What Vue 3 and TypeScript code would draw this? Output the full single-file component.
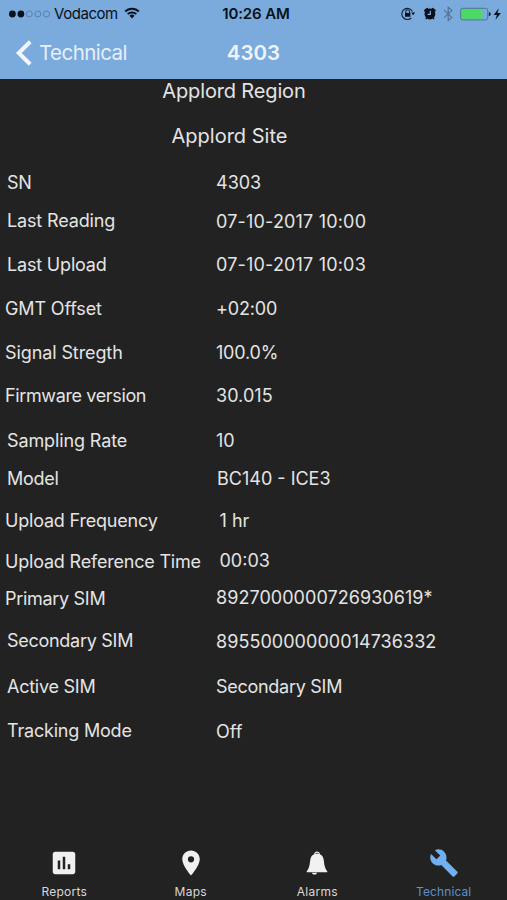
<script setup lang="ts">
interface Detail {
  label: string
  value: string
  height: number
  inset: number
  valueInset: number
  labelDrop: number
  valueDrop: number
  labelTrack: number
  valueTrack: number
}

const row = (
  label: string, value: string, height: number,
  inset = 7, valueInset = 0, labelDrop = 0, valueDrop = 0,
  labelTrack = 0, valueTrack = 0,
): Detail => ({ label, value, height, inset, valueInset, labelDrop, valueDrop, labelTrack, valueTrack })

const details: Detail[] = [
  row('SN', '4303', 38, 7, 0, 0, 0, -0.3, 0),
  row('Last Reading', '07-10-2017 10:00', 44, 7, 0, 0, 1, -0.15, 0.18),
  row('Last Upload', '07-10-2017 10:03', 44, 7, 0, 0, 0, -0.18, 0.18),
  row('GMT Offset', '+02:00', 44, 5, 0, 0, 0, -0.15, -0.15),
  row('Signal Stregth', '100.0%', 43, 5, 0, 0, 0, -0.1, -0.2),
  row('Firmware version', '30.015', 45, 5, 0, 0, 0, -0.37, 0.05),
  row('Sampling Rate', '10', 38, 7, 0, 0, 0, -0.12, 0),
  row('Model', 'BC140 - ICE3', 42, 7, 1, 0, 0, -0.25, 0),
  row('Upload Frequency', '1 hr', 40, 5, 3.5, 0, 0, -0.2, 0),
  row('Upload Reference Time', '00:03', 37, 5, 3.5, 1, 0, -0.2, 0),
  row('Primary SIM', '8927000000726930619*', 43, 5, 0, 1, 0, -0.3, 0.05),
  row('Secondary SIM', '89550000000014736332', 46, 7, 0, 0, 1, -0.28, 0.05),
  row('Active SIM', 'Secondary SIM', 44, 7, 0, 0, 0, -0.25, -0.28),
  row('Tracking Mode', 'Off', 44, 7, 0, 0, 1, -0.2, 0),
]

const px = (n: number) => `${n}px`
const tabs = ['Reports', 'Maps', 'Alarms', 'Technical']
</script>

<template>
  <div class="screen">
    <header class="header">
      <div class="status">
        <div class="carrier">
          <svg class="signal" width="43" height="10" viewBox="0 0 43 10">
            <circle cx="4.4" cy="5" r="3.4" fill="#08111b" />
            <circle cx="12.9" cy="5" r="3.4" fill="#08111b" />
            <g fill="none" stroke="#557ba4" stroke-width=".9">
              <circle cx="21.3" cy="5" r="3" /><circle cx="29.9" cy="5" r="3" /><circle cx="38.5" cy="5" r="3" />
            </g>
          </svg>
          <span class="carrier-name">Vodacom</span>
          <svg class="wifi" width="16" height="12" viewBox="0 0 16 12">
            <g fill="none" stroke="#08111b" stroke-width="1.9">
              <path d="M1.2 4.5a9.6 9.6 0 0 1 13.6 0" /><path d="M3.7 7.2a6.1 6.1 0 0 1 8.6 0" />
            </g>
            <path d="M5.5 8.8a3.6 3.6 0 0 1 5 0L8 11.5z" fill="#08111b" />
          </svg>
        </div>
        <div class="clock">10:26 AM</div>
        <div class="indicators">
          <svg width="102" height="16" viewBox="0 0 102 16">
            <g fill="none" stroke="#13202e" stroke-width="1.1">
              <path d="M10.3 12A5.6 5.6 0 1 1 11.4 5.4" />
              <path d="M4.8 7.4V5.700a1.900 1.900 0 0 1 3.800 0v1.700" />
            </g>
            <path d="M4 6.900h5.400v3.900H4zM10.100 6.500h4L12.200 9.200z" fill="#08111b" />
            <circle cx="28.900" cy="8" r="5.400" fill="#08111b" />
            <path d="M24 4.600L26.300 2.800M31.500 2.800L33.800 4.600" stroke="#08111b" stroke-width="2" stroke-linecap="round" />
            <path d="M25.800 12L24.800 13.200M32 12L33 13.200" stroke="#08111b" stroke-width="1.300" />
            <path d="M29.300 4.800V8.400H26.600" fill="none" stroke="#8fb5dd" stroke-width="1.100" />
            <path d="M43.200 4.200l7.600 7.200-3.600 3.200V1.200l3.600 3.200-7.600 7.200" fill="none" stroke="#4e7096" stroke-width="1.100" />
            <rect x="59.700" y="2.300" width="27" height="11.600" rx="2" fill="none" stroke="#4f7594" stroke-width="1" />
            <rect x="60.800" y="3.400" width="20.600" height="9.400" rx="1" fill="#4cdb62" />
            <path d="M87.800 6q2 .3 2 2.100t-2 2.100z" fill="#13202e" />
            <path d="M97.800 2.300L92.700 8.900h3.200L94.400 13.900l5.400-6.900h-3.300z" fill="#08111b" />
          </svg>
        </div>
      </div>
      <nav class="nav">
        <div class="back">
          <svg width="18" height="26" viewBox="0 0 18 26">
            <path d="M16.200 1.800L4.800 13 16.200 24.200" fill="none" stroke="#f3f6fa" stroke-width="4" />
          </svg>
          <span>Technical</span>
        </div>
        <h1>4303</h1>
      </nav>
    </header>

    <main>
      <div class="place region">Applord Region</div>
      <div class="place site">Applord Site</div>
      <dl class="details">
        <div v-for="d in details" :key="d.label" class="detail" :style="{ height: px(d.height) }">
          <dt :style="{ paddingLeft: px(d.inset), paddingTop: px(d.labelDrop), letterSpacing: px(d.labelTrack) }">{{ d.label }}</dt>
          <dd :style="{ paddingLeft: px(d.valueInset), paddingTop: px(d.valueDrop), letterSpacing: px(d.valueTrack) }">{{ d.value }}</dd>
        </div>
      </dl>
    </main>

    <footer class="tabs">
      <div v-for="t in tabs" :key="t" class="tab" :class="{ active: t === 'Technical' }">
        <svg width="30" height="30" viewBox="0 0 24 24" fill="currentColor">
          <path v-if="t === 'Reports'" d="M19 3H5c-1.100 0-2 .9-2 2v14c0 1.100.9 2 2 2h14c1.100 0 2-.9 2-2V5c0-1.100-.9-2-2-2zM9 17H7v-7h2v7zm4 0h-2V7h2v10zm4 0h-2v-4h2v4z" />
          <path v-else-if="t === 'Maps'" d="M12 2C8.130 2 5 5.130 5 9c0 5.250 7 13 7 13s7-7.750 7-13c0-3.870-3.130-7-7-7zm0 9.500a2.500 2.500 0 0 1 0-5 2.500 2.500 0 0 1 0 5z" />
          <g v-else-if="t === 'Alarms'">
            <path d="M9.700 4.900c0-2.700 4.600-2.700 4.600 0 2.200.9 2.900 2.700 3.200 5.300.4 4.200.9 6 2.700 8.400v.8H3.800v-.8c1.800-2.400 2.300-4.200 2.700-8.400.3-2.600 1-4.400 3.200-5.300z" />
            <path d="M8 19.700h4c-.1 2.100-3.900 2.100-4 0z" />
            <path d="M10.700 4.300h2.600" stroke="#555" stroke-width=".8" />
          </g>
          <path v-else d="M22.700 19l-9.100-9.100c.9-2.300.4-5-1.500-6.900-2-2-5-2.400-7.400-1.300L9 6 6 9 1.600 4.700C.4 7.100.9 10.100 2.900 12.100c1.900 1.900 4.600 2.400 6.900 1.500l9.100 9.100c.4.400 1 .4 1.400 0l2.300-2.300c.5-.4.5-1.100.1-1.400z" />
        </svg>
        <span>{{ t }}</span>
      </div>
    </footer>
  </div>
</template>

<style>
body { background: #222; }
</style>

<style scoped>
.screen {
  width: 507px;
  height: 900px;
  display: flex;
  flex-direction: column;
  overflow: hidden;
  background: #222;
  color: #e4e4e4;
  font-family: Inter, "Liberation Sans", sans-serif;
  font-size: 18px;
  line-height: 24px;
}
.header { height: 79px; background: #7aabdc; box-shadow: 0 1px #182029; flex: none; }
.status { display: grid; grid-template-columns: 1fr auto 1fr; height: 27px; align-items: center; color: #08111b; font-size: 15px; }
.carrier { display: flex; align-items: center; padding-left: 8px; }
.carrier-name { margin-left: 3px; letter-spacing: -0.45px; }
.wifi { margin-left: 6px; margin-top: -2px; }
.clock { font-weight: 600; padding-left: 5px; font-size: 15px; letter-spacing: -0.1px; }
.indicators { display: flex; justify-content: flex-end; padding-right: 4px; }
.nav { display: grid; grid-template-columns: 1fr auto 1fr; height: 51px; align-items: center; color: #f0f4f9; font-size: 20.5px; }
.back { display: flex; align-items: center; padding-left: 14px; gap: 7px; color: #e6eef7; letter-spacing: -0.55px; }
h1 { margin: 0; font-size: 20.5px; font-weight: 600; }
main { flex: 1; }
.place { text-align: center; font-size: 20px; height: 24px; letter-spacing: -0.15px; }
.region { padding-right: 39px; }
.site { padding-top: 21px; padding-right: 48px; letter-spacing: 0; }
.details { margin: 23px 0 0; }
.detail { display: grid; grid-template-columns: 216px 1fr; }
dt, dd { margin: 0; white-space: nowrap; }
.tabs { display: grid; grid-template-columns: repeat(4, 1fr); height: 52px; flex: none; padding-left: 1px; }
.tab { display: flex; flex-direction: column; align-items: center; color: #f0f0f0; font-size: 12px; line-height: 16px; }
.tab svg { margin-bottom: 6px; }
.tab span { color: #d8d8d8; letter-spacing: 0.25px; }
.tab.active { color: #6fb0f3; }
.tab.active span { color: #5b91c9; letter-spacing: 0.1px; }
</style>
